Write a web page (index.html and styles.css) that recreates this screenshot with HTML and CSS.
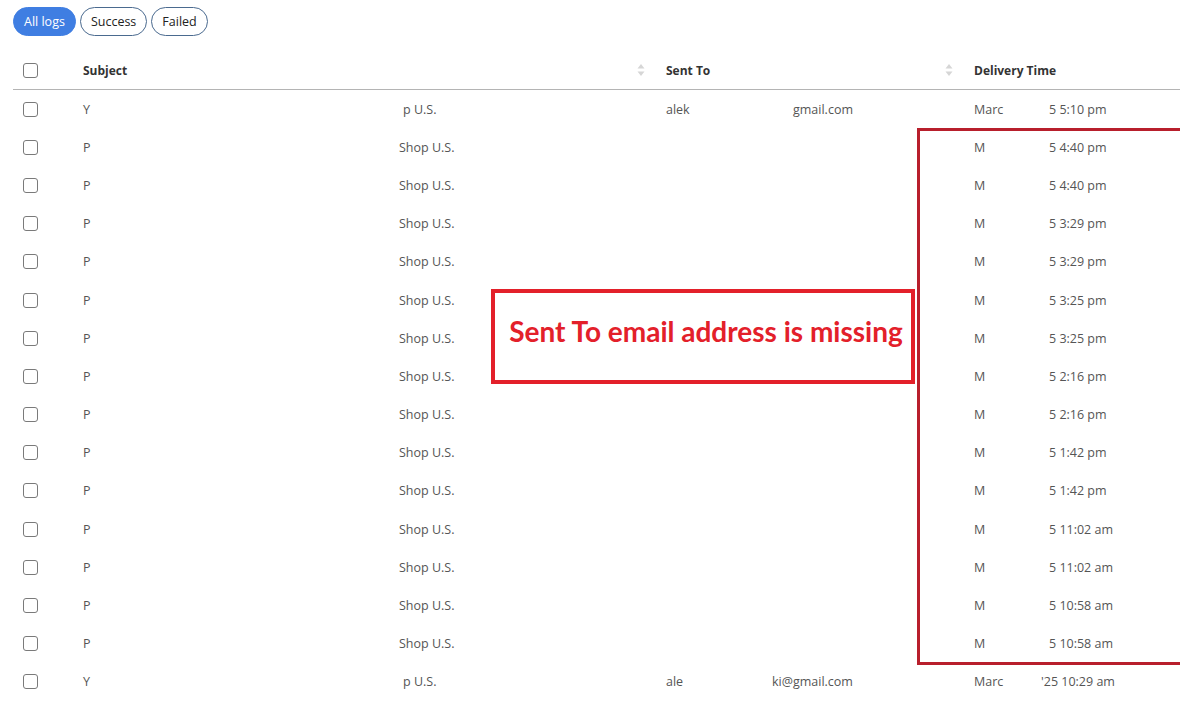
FILE: index.html
```html
<!DOCTYPE html>
<html lang="en">
<head>
<meta charset="utf-8">
<title>Email logs</title>
<link rel="stylesheet" href="styles.css">
</head>
<body>
<div class="page">
  <div class="filters">
    <button class="pill active">All logs</button>
    <button class="pill">Success</button>
    <button class="pill">Failed</button>
  </div>

  <div class="table">
    <div class="row head">
      <div class="cell c-check"><span class="cb"></span></div>
      <div class="cell c-subj"><span>Subject</span><svg class="sort" width="8" height="14" viewBox="0 0 8 14"><path d="M4 1 L7.5 5.5 L0.5 5.5 Z M0.5 8.5 L7.5 8.5 L4 13 Z"/></svg></div>
      <div class="cell c-to"><span>Sent To</span><svg class="sort" width="8" height="14" viewBox="0 0 8 14"><path d="M4 1 L7.5 5.5 L0.5 5.5 Z M0.5 8.5 L7.5 8.5 L4 13 Z"/></svg></div>
      <div class="cell c-time"><span>Delivery Time</span></div>
    </div>

    <div class="row">
      <div class="cell c-check"><span class="cb"></span></div>
      <div class="cell c-subj"><span class="lead lead-y">Y</span><span>p U.S.</span></div>
      <div class="cell c-to"><span class="lead lead-m1">alek</span><span>gmail.com</span></div>
      <div class="cell c-time"><span class="lead lead-t">Marc</span><span>5 5:10 pm</span></div>
    </div>
    <div class="row">
      <div class="cell c-check"><span class="cb"></span></div>
      <div class="cell c-subj"><span class="lead">P</span><span>Shop U.S.</span></div>
      <div class="cell c-to"></div>
      <div class="cell c-time"><span class="lead lead-t">M</span><span>5 4:40 pm</span></div>
    </div>
    <div class="row">
      <div class="cell c-check"><span class="cb"></span></div>
      <div class="cell c-subj"><span class="lead">P</span><span>Shop U.S.</span></div>
      <div class="cell c-to"></div>
      <div class="cell c-time"><span class="lead lead-t">M</span><span>5 4:40 pm</span></div>
    </div>
    <div class="row">
      <div class="cell c-check"><span class="cb"></span></div>
      <div class="cell c-subj"><span class="lead">P</span><span>Shop U.S.</span></div>
      <div class="cell c-to"></div>
      <div class="cell c-time"><span class="lead lead-t">M</span><span>5 3:29 pm</span></div>
    </div>
    <div class="row">
      <div class="cell c-check"><span class="cb"></span></div>
      <div class="cell c-subj"><span class="lead">P</span><span>Shop U.S.</span></div>
      <div class="cell c-to"></div>
      <div class="cell c-time"><span class="lead lead-t">M</span><span>5 3:29 pm</span></div>
    </div>
    <div class="row">
      <div class="cell c-check"><span class="cb"></span></div>
      <div class="cell c-subj"><span class="lead">P</span><span>Shop U.S.</span></div>
      <div class="cell c-to"></div>
      <div class="cell c-time"><span class="lead lead-t">M</span><span>5 3:25 pm</span></div>
    </div>
    <div class="row">
      <div class="cell c-check"><span class="cb"></span></div>
      <div class="cell c-subj"><span class="lead">P</span><span>Shop U.S.</span></div>
      <div class="cell c-to"></div>
      <div class="cell c-time"><span class="lead lead-t">M</span><span>5 3:25 pm</span></div>
    </div>
    <div class="row">
      <div class="cell c-check"><span class="cb"></span></div>
      <div class="cell c-subj"><span class="lead">P</span><span>Shop U.S.</span></div>
      <div class="cell c-to"></div>
      <div class="cell c-time"><span class="lead lead-t">M</span><span>5 2:16 pm</span></div>
    </div>
    <div class="row">
      <div class="cell c-check"><span class="cb"></span></div>
      <div class="cell c-subj"><span class="lead">P</span><span>Shop U.S.</span></div>
      <div class="cell c-to"></div>
      <div class="cell c-time"><span class="lead lead-t">M</span><span>5 2:16 pm</span></div>
    </div>
    <div class="row">
      <div class="cell c-check"><span class="cb"></span></div>
      <div class="cell c-subj"><span class="lead">P</span><span>Shop U.S.</span></div>
      <div class="cell c-to"></div>
      <div class="cell c-time"><span class="lead lead-t">M</span><span>5 1:42 pm</span></div>
    </div>
    <div class="row">
      <div class="cell c-check"><span class="cb"></span></div>
      <div class="cell c-subj"><span class="lead">P</span><span>Shop U.S.</span></div>
      <div class="cell c-to"></div>
      <div class="cell c-time"><span class="lead lead-t">M</span><span>5 1:42 pm</span></div>
    </div>
    <div class="row">
      <div class="cell c-check"><span class="cb"></span></div>
      <div class="cell c-subj"><span class="lead">P</span><span>Shop U.S.</span></div>
      <div class="cell c-to"></div>
      <div class="cell c-time"><span class="lead lead-t">M</span><span>5 11:02 am</span></div>
    </div>
    <div class="row">
      <div class="cell c-check"><span class="cb"></span></div>
      <div class="cell c-subj"><span class="lead">P</span><span>Shop U.S.</span></div>
      <div class="cell c-to"></div>
      <div class="cell c-time"><span class="lead lead-t">M</span><span>5 11:02 am</span></div>
    </div>
    <div class="row">
      <div class="cell c-check"><span class="cb"></span></div>
      <div class="cell c-subj"><span class="lead">P</span><span>Shop U.S.</span></div>
      <div class="cell c-to"></div>
      <div class="cell c-time"><span class="lead lead-t">M</span><span>5 10:58 am</span></div>
    </div>
    <div class="row">
      <div class="cell c-check"><span class="cb"></span></div>
      <div class="cell c-subj"><span class="lead">P</span><span>Shop U.S.</span></div>
      <div class="cell c-to"></div>
      <div class="cell c-time"><span class="lead lead-t">M</span><span>5 10:58 am</span></div>
    </div>
    <div class="row">
      <div class="cell c-check"><span class="cb"></span></div>
      <div class="cell c-subj"><span class="lead lead-y">Y</span><span>p U.S.</span></div>
      <div class="cell c-to"><span class="lead lead-m2">ale</span><span>ki@gmail.com</span></div>
      <div class="cell c-time"><span class="lead lead-t2">Marc</span><span>'25 10:29 am</span></div>
    </div>
  </div>

  <div class="note">Sent To email address is missing</div>
  <div class="highlight"></div>
</div>
</body>
</html>
```

FILE: styles.css
```css
* { box-sizing: border-box; }

html, body {
  margin: 0;
  padding: 0;
  background: #ffffff;
}

body {
  width: 1180px;
  height: 709px;
  overflow: hidden;
  font-family: "Open Sans", "Noto Sans", sans-serif;
  font-size: 12.5px;
  color: #555555;
}

.page {
  position: relative;
  padding: 7px 0 0 13px;
}

.filters {
  display: flex;
  gap: 4px;
  height: 29px;
}

.pill {
  font-family: "Open Sans", "Noto Sans", sans-serif;
  font-size: 12.5px;
  color: #222222;
  background: #ffffff;
  border: 1px solid #4a6a8f;
  border-radius: 15px;
  padding: 0 10px;
  height: 29px;
  line-height: 27px;
  cursor: pointer;
}

.pill.active {
  background: #3f7ee2;
  border-color: #3f7ee2;
  color: #ffffff;
}

.table {
  margin-top: 15px;
}

.row {
  display: grid;
  grid-template-columns: 60px 583px 308px 1fr;
  height: 38.2px;
  align-items: center;
}

.row.head {
  height: 39px;
  border-bottom: 1px solid #b4b4b4;
  font-weight: 700;
  font-size: 12px;
  color: #333333;
}

.cell {
  display: flex;
  align-items: center;
  padding: 0 10px;
  white-space: nowrap;
  overflow: hidden;
}

.head .c-subj,
.head .c-to {
  justify-content: space-between;
  padding-right: 11px;
}

.sort {
  fill: #d6d6d6;
  flex: none;
}

.cb {
  display: block;
  width: 15px;
  height: 15px;
  border: 1px solid #7a7a7a;
  border-radius: 3px;
  background: #ffffff;
}

.lead { display: inline-block; width: 316px; flex: none; }
.lead-y { width: 320px; }
.lead-m1 { width: 127px; }
.lead-m2 { width: 106px; }
.lead-t { width: 75px; }
.lead-t2 { width: 67px; }

.note {
  position: absolute;
  left: 491px;
  top: 289px;
  width: 424px;
  height: 95px;
  border: 4px solid #e3202a;
  color: #e3202a;
  font-family: "Lato", "Open Sans", sans-serif;
  font-weight: 700;
  font-size: 28px;
  display: flex;
  align-items: center;
  justify-content: center;
  padding: 0 0 12px 6px;
  background: #ffffff;
}

.highlight {
  position: absolute;
  left: 917px;
  top: 128px;
  width: 300px;
  height: 537px;
  border: 3px solid #b81f2c;
  pointer-events: none;
}
```
